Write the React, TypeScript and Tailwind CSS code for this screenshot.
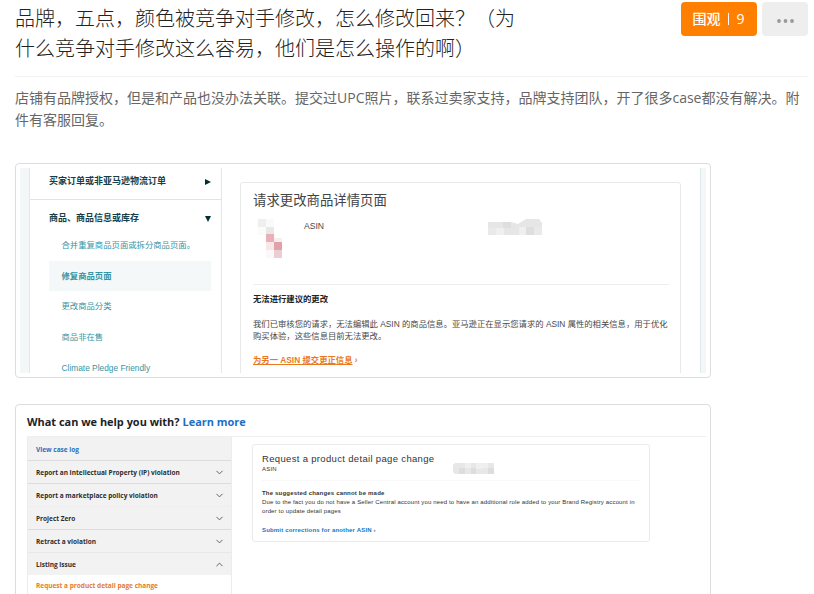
import { ChevronDown, ChevronUp } from 'lucide-react';

const SUB_LINKS = [
  { label: '合并重复商品页面或拆分商品页面。', active: false },
  { label: '修复商品页面', active: true },
  { label: '更改商品分类', active: false },
  { label: '商品非在售', active: false },
  { label: 'Climate Pledge Friendly', active: false },
];

const HELP_ROWS = [
  { label: 'Report an Intellectual Property (IP) violation', open: false, border: 'border-[#dcdcdc]' },
  { label: 'Report a marketplace policy violation', open: false, border: 'border-[#dcdcdc]' },
  { label: 'Project Zero', open: false, border: 'border-[#eeeeee]' },
  { label: 'Retract a violation', open: false, border: 'border-[#dcdcdc]' },
  { label: 'Listing issue', open: true, border: 'border-[#e8e8e8]' },
];

// Mosaic blocks that hide the product data
const PRODUCT_BLOCKS = [
  { x: 0, y: 0, c: '#efefef' },
  { x: 8, y: 0, c: '#fafafa' },
  { x: 0, y: 8, c: '#fbfbfb' },
  { x: 8, y: 8, c: '#e9e8e9' },
  { x: 8, y: 15, c: '#e9b0b5' },
  { x: 16, y: 19, c: '#f7eeef' },
  { x: 8, y: 23, c: '#f7e6ea' },
  { x: 16, y: 23, c: '#e0a1a8' },
  { x: 8, y: 31, c: '#fcf8f8' },
  { x: 16, y: 31, c: '#ebced2' },
];

function ProductMosaic() {
  return (
    <svg width="24" height="39" viewBox="0 0 24 39" shapeRendering="crispEdges">
      {PRODUCT_BLOCKS.map((b, i) => (
        <rect key={i} x={b.x} y={b.y} width="8" height="8" fill={b.c} />
      ))}
    </svg>
  );
}

function AsinMosaic() {
  return (
    <svg width="54" height="16" viewBox="0 0 54 16">
      <path d="M0 3h23l7 2 8-5h13l3 4v12H0z" fill="#e6e6e7" />
      <path d="M8 9h8v7H8zM31 8h7v8h-7z" fill="#efefef" />
      <path d="M15 3h8v6h-8zM38 8h8v8h-8z" fill="#dededf" />
      <path d="M0 9h8v7H0zM46 8h8v8h-8z" fill="#e9e9ea" />
    </svg>
  );
}

function SmallMosaic() {
  return (
    <svg width="41" height="11" viewBox="0 0 41 11">
      <path d="M2 0h39v11H2L0 9V2z" fill="#e7e7e8" />
      <path d="M12 0h6v5h-6zM23 0h6v6h-6zM29 0h6v5h-6z" fill="#efefef" />
      <path d="M6 5h6v6H6zM18 5h5v6h-5zM35 5h6v6h-6z" fill="#dcdddd" />
    </svg>
  );
}

function ChineseCase() {
  return (
    <div className="mt-8 h-[215px] w-[696px] rounded border border-[#dddddd] p-1 font-['Liberation_Sans','Noto_Sans_CJK_SC',sans-serif]">
      <div className="flex h-[205px] overflow-hidden">
        <div className="w-[10px] shrink-0 border-r border-[#e3e9eb] bg-[#f3f7f8]" />

        {/* Sidebar */}
        <div className="w-[192px] shrink-0 border-r border-[#e3e7e8] text-[8.35px] text-[#3695a3]">
          <div className="flex h-8 items-center justify-between border-b border-[#dfe4e6] pr-[10px] pb-1 pl-[19px] text-[9px] font-bold text-[#173f49]">
            <span className="whitespace-nowrap">买家订单或非亚马逊物流订单</span>
            <svg width="6" height="6" viewBox="0 0 6 6" fill="#002f36"><path d="M0 0l6 3-6 3z" /></svg>
          </div>
          <div className="flex h-[30px] items-center justify-between pt-[7px] pr-[10px] pl-[19px] text-[9px] font-bold text-[#173f49]">
            <span>商品、商品信息或库存</span>
            <svg width="6" height="6" viewBox="0 0 6 6" fill="#002f36"><path d="M0 0h6L3 6z" /></svg>
          </div>
          <div className="pr-[10px] pl-[19px]">
            {SUB_LINKS.map((link) => (
              <div
                key={link.label}
                className={`flex h-[30.7px] items-center pl-[12.5px] whitespace-nowrap ${link.active ? 'bg-[#f4f8f9] font-bold' : ''}`}
              >
                {link.label}
              </div>
            ))}
          </div>
        </div>

        {/* Detail */}
        <div className="flex-1 pt-[14px] pr-[19px] pl-[18px]">
          <div className="h-[220px] rounded-[3px] border border-[#e9e9e9] pt-2 pr-[11px] pl-3 text-[8.33px] text-[#484848]">
            <div className="text-[13.4px] leading-5 text-[#444444]">请求更改商品详情页面</div>
            <div className="flex h-[74px] border-b border-[#eeeeee] pt-2">
              <div className="pl-[5px]"><ProductMosaic /></div>
              <div className="ml-[22px] w-[184px] text-[8.6px] leading-[15px]">ASIN</div>
              <AsinMosaic />
            </div>
            <div className="mt-2 leading-3 font-bold text-[#222222]">无法进行建议的更改</div>
            <p className="mt-[13px] leading-3 whitespace-nowrap">
              我们已审核您的请求，无法编辑此 ASIN 的商品信息。亚马逊正在显示您请求的 ASIN 属性的相关信息，用于优化
              <br />
              购买体验，这些信息目前无法更改。
            </p>
            <div className="mt-3 leading-3 font-bold text-[#ea7a1f]">
              <span className="underline">为另一 ASIN 提交更正信息</span> ›
            </div>
          </div>
        </div>
        <div className="w-[6px] shrink-0 border-l border-[#dfe8ea] bg-[#f3f7f8]" />
      </div>
    </div>
  );
}

function EnglishCase() {
  return (
    <div className="mt-[26px] h-[260px] w-[696px] rounded border border-[#dddddd] pt-1 pr-1 pl-[11px] font-['Open_Sans',sans-serif]">
      <div className="flex h-[27px] items-center gap-[3px] text-[10.95px] font-bold whitespace-nowrap text-[#1d2227]">
        <span>What can we help you with?</span>
        <span className="text-[#1c6fc4]">Learn more</span>
      </div>
      <div className="flex border-t border-[#f0f0f0]">
        {/* Sidebar */}
        <div className="w-[205px] shrink-0 border-x border-[#ececec] text-[6.5px] font-bold whitespace-nowrap text-[#2d2d2d]">
          <div className="flex h-[23px] items-center bg-[#f2f2f2] pt-[2px] pl-2 text-[#2470c0]">View case log</div>
          {HELP_ROWS.map((row) => (
            <div key={row.label} className={`flex h-[23px] items-center justify-between border-t bg-[#f2f2f2] pt-px pr-[6px] pl-2 ${row.border}`}>
              <span>{row.label}</span>
              {row.open ? (
                <ChevronUp className="h-[11px] w-[11px] text-[#555555]" />
              ) : (
                <ChevronDown className="h-[11px] w-[11px] text-[#555555]" />
              )}
            </div>
          ))}
          <div className="flex h-[21px] items-center pt-px pl-2 text-[#e47b2e]">Request a product detail page change</div>
        </div>

        {/* Detail */}
        <div className="mt-[7px] ml-5 h-[98px] w-[398px] rounded-[3px] border border-[#ebebeb] px-[9px] pt-[7px] font-['Liberation_Sans',sans-serif] text-[6px] whitespace-nowrap text-[#333333]">
          <div className="flex justify-between pr-[146px]">
            <div>
              <div className="text-[9.5px] leading-[13px] tracking-[0.33px]">Request a product detail page change</div>
              <div className="leading-[9px] tracking-[0.2px]">ASIN</div>
            </div>
            <div className="pt-[11px]"><SmallMosaic /></div>
          </div>
          <div className="mt-[6px] border-t border-[#f8f8f8] pt-[7px] leading-[10px] font-bold tracking-[0.19px]">The suggested changes cannot be made</div>
          <p className="leading-[9px] tracking-[0.15px]">
            Due to the fact you do not have a Seller Central account you need to have an additional role added to your Brand Registry account in
            <br />
            order to update detail pages
          </p>
          <div className="mt-[9px] leading-[10px] font-bold tracking-[0.17px] text-[#1377c8]">Submit corrections for another ASIN ›</div>
        </div>
      </div>
    </div>
  );
}

export default function App() {
  return (
    <div className="h-[594px] w-[814px] overflow-hidden bg-white pl-[15px] pr-[6px] font-['Open_Sans','Noto_Sans_CJK_SC',sans-serif]">
      {/* Question header */}
      <div className="flex h-[77px] items-start justify-between border-b border-[#f2f2f2]">
        <h1 className="pt-[3px] font-['Noto_Sans_CJK_SC',sans-serif] text-xl leading-[30px] font-light whitespace-nowrap text-[#222222]">
          品牌，五点，颜色被竞争对手修改，怎么修改回来？（为
          <br />
          什么竞争对手修改这么容易，他们是怎么操作的啊）
        </h1>
        <div className="flex gap-[5px] pt-[2px]">
          <button className="flex h-[34px] w-[76px] items-center justify-center rounded bg-[#ff8000] pr-px text-sm font-medium whitespace-nowrap text-white">
            围观<span className="mr-[7px] ml-2 h-3 w-px bg-white" />9
          </button>
          <button className="flex h-[34px] w-[46px] items-center justify-center rounded bg-[#eeeeee] pt-1">
            <svg width="17" height="4" viewBox="0 0 17 4" fill="#999999">
              <circle cx="2" cy="2" r="1.9" />
              <circle cx="8.5" cy="2" r="1.9" />
              <circle cx="15" cy="2" r="1.9" />
            </svg>
          </button>
        </div>
      </div>

      <p className="mt-[10px] text-sm leading-[22px] whitespace-nowrap text-[#666666]">
        店铺有品牌授权，但是和产品也没办法关联。提交过UPC照片，联系过卖家支持，品牌支持团队，开了很多case都没有解决。附
        <br />
        件有客服回复。
      </p>

      <ChineseCase />
      <EnglishCase />
    </div>
  );
}
